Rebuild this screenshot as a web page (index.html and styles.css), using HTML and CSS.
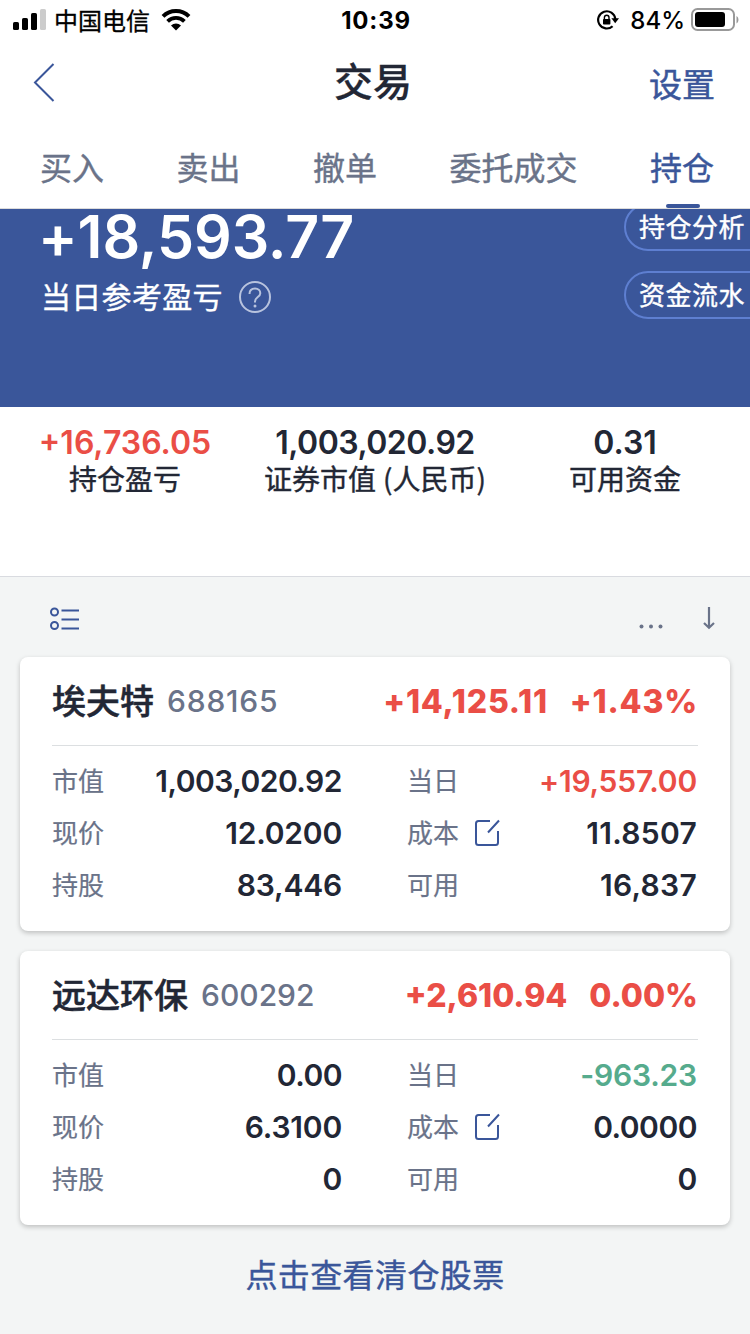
FILE: index.html
```html
<!DOCTYPE html>
<html lang="zh-CN">
<head>
    <meta charset="UTF-8">
    <meta name="viewport" content="width=device-width, initial-scale=1.0">
    <title>交易</title>
    <link rel="stylesheet" href="styles.css">
</head>
<body>

<div class="status">
    <div class="status-left">
        <svg width="34" height="22" viewBox="0 0 34 22">
            <rect x="0" y="13" width="6" height="8" rx="1.6"/>
            <rect x="9" y="9" width="6" height="12" rx="1.6"/>
            <rect x="18" y="4" width="6" height="17" rx="1.6"/>
            <rect x="27" y="0" width="6" height="21" rx="1.6" fill="#ccc"/>
        </svg>
        <span class="carrier">中国电信</span>
        <svg class="wifi" width="30" height="22" viewBox="0 0 30 22">
            <path d="M2 7.4A18.5 18.5 0 0 1 28 7.4" fill="none" stroke="#000" stroke-width="4"/>
            <path d="M6.6 12.4A12 12 0 0 1 23.4 12.4" fill="none" stroke="#000" stroke-width="3.8"/>
            <path d="M10 16.6A7.2 7.2 0 0 1 20 16.6L15 21.6Z"/>
        </svg>
    </div>
    <div class="clock">10:39</div>
    <div class="status-right">
        <svg width="22" height="20" viewBox="0 0 22 20">
            <path d="M15.6 16.2A8.6 8.6 0 1 1 18.3 9" fill="none" stroke="#000" stroke-width="2.2"/>
            <path d="M14.4 8.2H22L18.2 13.2Z"/>
            <rect x="6" y="9" width="7.4" height="5.6" rx=".8"/>
            <path d="M7.4 9.5V7.6a2.3 2.3 0 0 1 4.6 0v1.9" fill="none" stroke="#000" stroke-width="1.4"/>
        </svg>
        <span class="percent">84%</span>
        <svg width="48" height="24" viewBox="0 0 48 24">
            <rect x="1" y="1" width="42" height="21" rx="5.5" fill="none" stroke="#999" stroke-width="2"/>
            <rect x="4" y="4" width="30" height="15" rx="3"/>
            <path d="M45.5 8v7.5c2.6-1.6 2.6-5.9 0-7.5Z" fill="#999"/>
        </svg>
    </div>
</div>

<div class="navbar">
    <svg class="back" width="24" height="40" viewBox="0 0 24 40">
        <path d="M20.500 2L2 20.500 20.500 39" fill="none" stroke="#3a569a" stroke-width="2"/>
    </svg>
    <h1>交易</h1>
    <a class="settings">设置</a>
</div>

<div class="tabs">
    <a>买入</a>
    <a>卖出</a>
    <a>撤单</a>
    <a>委托成交</a>
    <a class="active">持仓</a>
</div>

<div class="hero">
    <div class="profit">
        <div class="profit-num">+18,593.77</div>
        <div class="profit-label">
            <span>当日参考盈亏</span>
            <svg width="32" height="32" viewBox="0 0 32 32" fill="none" stroke="#b8c3de" stroke-width="2">
                <circle cx="16" cy="16" r="15"/>
                <path d="M10.500 13C10.500 9.600 12.500 7.500 16 7.500S21.300 9.700 21.300 12.200C21.300 16 16 16.200 16 20.500V21.500"/>
                <circle cx="16" cy="25" r="1.500" fill="#b8c3de" stroke="none"/>
            </svg>
        </div>
    </div>
    <div class="pills">
        <a class="pill">持仓分析</a>
        <a class="pill">资金流水</a>
    </div>
</div>

<div class="stats">
    <div class="stat">
        <div class="stat-num red">+16,736.05</div>
        <div class="stat-label">持仓盈亏</div>
    </div>
    <div class="stat">
        <div class="stat-num tight">1,003,020.92</div>
        <div class="stat-label"><span class="unit">证券市值</span>(人民币)</div>
    </div>
    <div class="stat">
        <div class="stat-num">0.31</div>
        <div class="stat-label">可用资金</div>
    </div>
</div>

<div class="holdings">
    <div class="toolbar">
        <svg width="30" height="24" viewBox="0 0 30 24" fill="none" stroke="#3a569a" stroke-width="2">
            <circle cx="4.500" cy="5" r="3.500"/>
            <circle cx="4.500" cy="18.500" r="3.500"/>
            <path d="M11.500 3.500H29M11.500 12.500H29M11.500 21.500H29"/>
        </svg>
        <div class="sort">
            <svg width="26" height="24" viewBox="0 0 26 24" fill="#6a7389">
                <circle cx="2.500" cy="19.500" r="2"/>
                <circle cx="12" cy="19.500" r="2"/>
                <circle cx="21.500" cy="19.500" r="2"/>
            </svg>
            <svg width="14" height="24" viewBox="0 0 14 24" fill="none" stroke="#6a7389" stroke-width="2.200">
                <path d="M7 0V20.500M2 16L7 20.800 12 16"/>
            </svg>
        </div>
    </div>

    <div class="card">
        <div class="card-head">
            <span class="name">埃夫特</span>
            <span class="code wide">688165</span>
            <span class="gain wide">+14,125.11</span>
            <span class="rate wide">+1.43%</span>
        </div>
        <div class="card-body">
            <div class="cell"><span class="label">市值</span><span class="num tight">1,003,020.92</span></div>
            <div class="cell"><span class="label">当日</span><span class="num red">+19,557.00</span></div>
            <div class="cell"><span class="label">现价</span><span class="num">12.0200</span></div>
            <div class="cell">
                <span class="label">成本</span>
                <svg class="edit" width="26" height="28" viewBox="0 0 26 28">
                    <path d="M16 2H4.500Q2 2 2 4.500V23.500Q2 26 4.500 26H21.500Q24 26 24 23.500V12M25 1.500L14 13.500" fill="none" stroke="#3a569a" stroke-width="2"/>
                </svg>
                <span class="num loose">11.8507</span>
            </div>
            <div class="cell"><span class="label">持股</span><span class="num">83,446</span></div>
            <div class="cell"><span class="label">可用</span><span class="num loose">16,837</span></div>
        </div>
    </div>

    <div class="card">
        <div class="card-head">
            <span class="name">远达环保</span>
            <span class="code">600292</span>
            <span class="gain">+2,610.94</span>
            <span class="rate">0.00%</span>
        </div>
        <div class="card-body">
            <div class="cell"><span class="label">市值</span><span class="num tight">0.00</span></div>
            <div class="cell"><span class="label">当日</span><span class="num green">-963.23</span></div>
            <div class="cell"><span class="label">现价</span><span class="num">6.3100</span></div>
            <div class="cell">
                <span class="label">成本</span>
                <svg class="edit" width="26" height="28" viewBox="0 0 26 28">
                    <path d="M16 2H4.500Q2 2 2 4.500V23.500Q2 26 4.500 26H21.500Q24 26 24 23.500V12M25 1.500L14 13.500" fill="none" stroke="#3a569a" stroke-width="2"/>
                </svg>
                <span class="num tight">0.0000</span>
            </div>
            <div class="cell"><span class="label">持股</span><span class="num">0</span></div>
            <div class="cell"><span class="label">可用</span><span class="num">0</span></div>
        </div>
    </div>

    <a class="closed-link">点击查看清仓股票</a>
</div>

</body>
</html>
```

FILE: styles.css
```css
* {
    box-sizing: border-box;
}
body {
    margin: 0;
    width: 750px;
    height: 1334px;
    overflow: hidden;
    display: flex;
    flex-direction: column;
    font-family: Inter, "Noto Sans CJK SC", sans-serif;
    color: #222735;
    background: #fff;
}
svg {
    display: block;
    flex: none;
}
.red {
    color: #ea4e46;
}
.green {
    color: #56ab8d;
}

/* status bar */
.status {
    height: 40px;
    display: grid;
    grid-template-columns: 1fr auto 1fr;
    align-items: center;
    padding: 0 11px 0 13px;
    color: #000;
}
.status-left, .status-right {
    display: flex;
    align-items: center;
}
.status-right {
    justify-content: flex-end;
}
.carrier {
    font-family: "Noto Sans CJK SC", sans-serif;
    font-size: 24px;
    line-height: 34px;
    padding-bottom: 1px;
    margin: 0 11px 0 7px;
    -webkit-text-stroke: .3px;
}
.clock {
    font-size: 24px;
    font-weight: 700;
    letter-spacing: .8px;
    padding-top: 1px;
}
.percent {
    font-size: 24px;
    font-weight: 500;
    padding-top: 1px;
    margin: 0 6px 0 11px;
}

/* title row */
.navbar {
    height: 84px;
    display: grid;
    grid-template-columns: 1fr auto 1fr;
    align-items: center;
    padding: 0 35px 0 33px;
    font-family: "Noto Sans CJK SC", sans-serif;
}
.navbar h1 {
    margin: 0;
    font-size: 39px;
    font-weight: 500;
    line-height: 78px;
    padding: 0 2px 6px 0;
    -webkit-text-stroke: .3px;
}
.settings {
    justify-self: end;
    font-size: 33px;
    line-height: 80px;
    padding-top: 2px;
    color: #3a569a;
    -webkit-text-stroke: .5px;
}

.tabs {
    height: 85px;
    display: flex;
    justify-content: space-between;
    padding: 0 36px 0 40px;
    border-bottom: 1px solid #dcdcdc;
    font-family: "Noto Sans CJK SC", sans-serif;
    font-size: 32px;
    line-height: 84px;
    color: #6a7389;
    -webkit-text-stroke: .4px;
}
.tabs .active {
    position: relative;
    color: #3a569a;
}
.tabs .active::after {
    content: "";
    position: absolute;
    left: 16px;
    bottom: 0;
    width: 34px;
    height: 4px;
    border-radius: 2px;
    background: #3a569a;
}

/* daily profit */
.hero {
    height: 198px;
    display: flex;
    justify-content: space-between;
    overflow: hidden;
    color: #fff;
    background: #3a569a;
}
.profit {
    padding-left: 38px;
}
.profit-num {
    height: 56px;
    font-size: 59px;
    font-weight: 600;
    line-height: 56px;
    letter-spacing: -.1px;
}
.profit-label {
    height: 62px;
    display: flex;
    align-items: center;
    gap: 16px;
    padding-left: 3px;
    font-family: "Noto Sans CJK SC", sans-serif;
    font-size: 30px;
    line-height: 56px;
    letter-spacing: .3px;
    -webkit-text-stroke: .4px;
}
.profit-label span {
    padding-bottom: 2px;
}
.profit-label svg {
    margin-top: 2px;
}
.pills {
    width: 126px;
    display: flex;
    flex-direction: column;
    gap: 20px;
    margin-top: -6px;
}
.pill {
    width: 160px;
    height: 48px;
    padding-left: 13px;
    border: 2px solid #5e7fd1;
    border-radius: 24px;
    font-family: "Noto Sans CJK SC", sans-serif;
    font-size: 26px;
    line-height: 41px;
    letter-spacing: .5px;
    -webkit-text-stroke: .4px;
}

.stats {
    height: 170px;
    display: flex;
    padding: 17px 0 0;
    border-bottom: 1px solid #d9dbe0;
    text-align: center;
}
.stat {
    width: 250px;
}
.stat-num {
    font-size: 32px;
    font-weight: 600;
    line-height: 37px;
}
.stat-label {
    font-family: "Noto Sans CJK SC", sans-serif;
    font-size: 28px;
    line-height: 34px;
    -webkit-text-stroke: .4px;
}
.unit {
    margin-right: 7px;
}

/* holdings */
.holdings {
    flex: 1;
    display: flex;
    flex-direction: column;
    gap: 20px;
    padding: 0 20px;
    background: #f3f5f5;
}
.toolbar {
    height: 60px;
    display: flex;
    align-items: flex-end;
    justify-content: space-between;
    padding: 0 14px 6px 30px;
}
.sort {
    display: flex;
    gap: 37px;
}
.card {
    height: 274px;
    padding: 0 32px;
    border-radius: 8px;
    background: #fff;
    box-shadow: 0 2px 5px rgba(0, 0, 0, .22);
}
.card-head {
    height: 89px;
    display: flex;
    align-items: center;
    border-bottom: 1px solid #dcdfe1;
    line-height: 88px;
}
.name {
    font-family: "Noto Sans CJK SC", sans-serif;
    font-size: 34px;
    font-weight: 500;
    line-height: 84px;
    padding-bottom: 2px;
    -webkit-text-stroke: .5px;
}
.code {
    margin: 0 auto 0 13px;
    font-size: 30px;
    font-weight: 500;
    color: #6a7389;
}
.code.wide {
    letter-spacing: .8px;
}
.gain, .rate {
    padding-top: 1px;
    font-size: 32px;
    font-weight: 800;
    color: #ea4e46;
}
.gain.wide, .rate.wide {
    letter-spacing: .8px;
}
.rate {
    margin-left: 22px;
}
.card-body {
    display: grid;
    grid-template-columns: 290px 290px;
    column-gap: 65px;
    grid-auto-rows: 52px;
    padding-top: 9px;
}
.cell {
    display: flex;
    align-items: center;
}
.label {
    font-family: "Noto Sans CJK SC", sans-serif;
    font-size: 26px;
    line-height: 46px;
    padding-bottom: 2px;
    color: #6a7389;
    -webkit-text-stroke: .2px;
}
.edit {
    margin-left: 15px;
}
.num {
    margin-left: auto;
    font-size: 30px;
    font-weight: 600;
    letter-spacing: -.2px;
}
.tight {
    letter-spacing: -.5px;
}
.loose {
    letter-spacing: .3px;
}
.closed-link {
    font-family: "Noto Sans CJK SC", sans-serif;
    font-size: 32px;
    line-height: 56px;
    letter-spacing: .4px;
    text-align: center;
    color: #3a569a;
    -webkit-text-stroke: .4px;
}
```
